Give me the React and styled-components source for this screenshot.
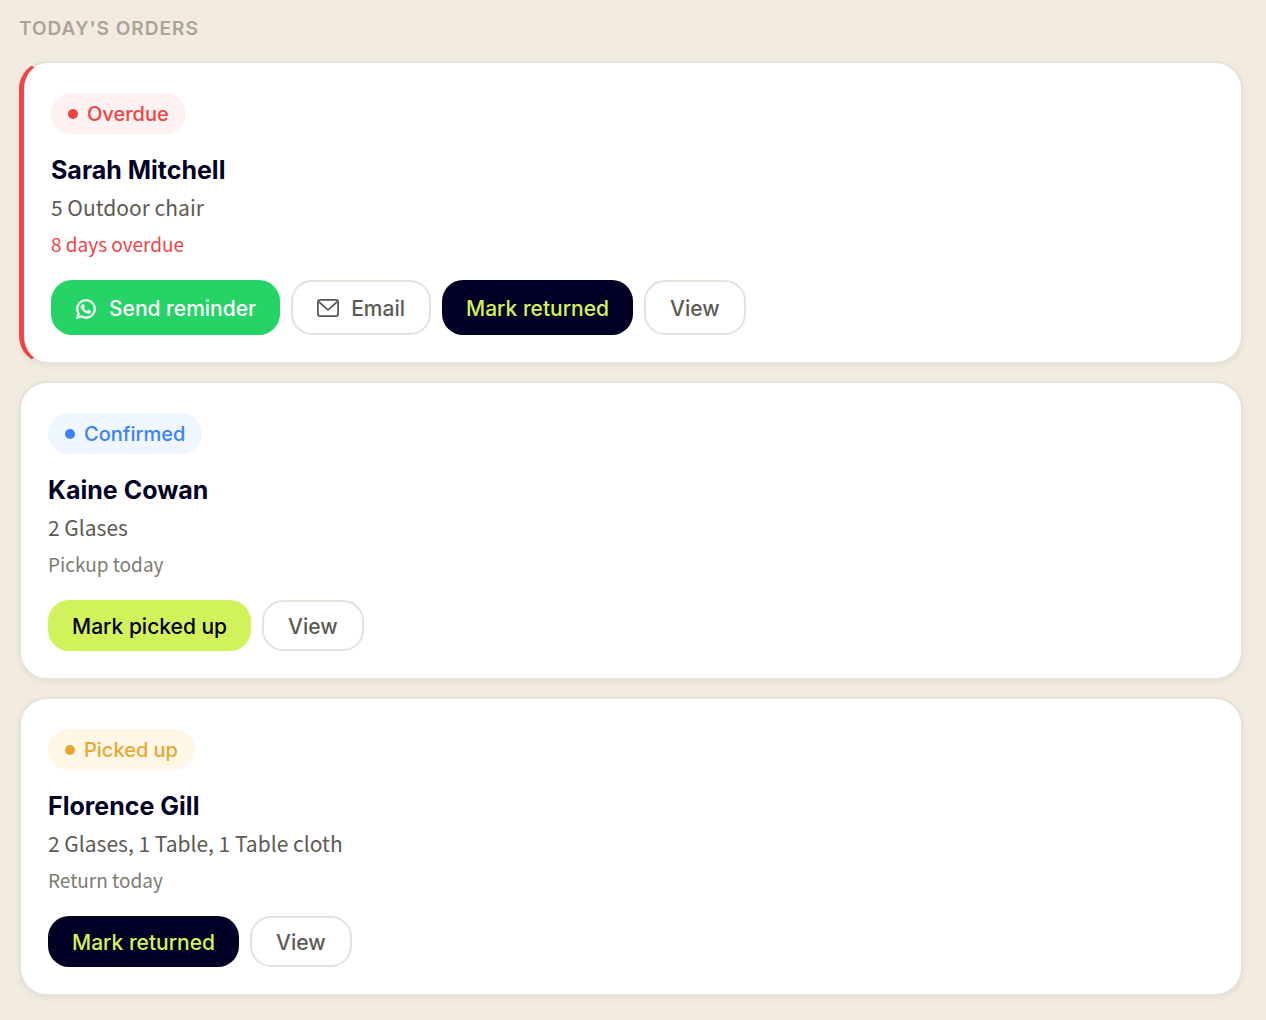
import React from 'react';
import styled, { createGlobalStyle, css } from 'styled-components';
import { FaWhatsapp } from 'react-icons/fa';

const headingFont = "Inter, 'Liberation Sans', sans-serif";
const bodyFont = "'Noto Sans CJK SC', 'Noto Sans', sans-serif";

const GlobalStyle = createGlobalStyle`
  * {
    box-sizing: border-box;
  }

  body {
    margin: 0;
    background-color: #f2ebdf;
    font-family: ${bodyFont};
    -webkit-font-smoothing: antialiased;
  }
`;

const Page = styled('main')`
  padding: 13px 23px 24px 19px;
`;

const SectionTitle = styled('h2')`
  margin: 0 0 16px;
  font: 600 19px/32px ${headingFont};
  letter-spacing: 1px;
  text-transform: uppercase;
  color: #a8a598;
`;

const OrderList = styled('div')`
  display: flex;
  flex-direction: column;
  gap: 17px;
`;

const Card = styled('article')`
  padding: 30px 27px 27px;
  background-color: #ffffff;
  border: 2px solid #e4e2da;
  border-radius: 28px;
  box-shadow: 0 2px 6px rgba(0, 0, 0, 0.06);
  ${props =>
    props.$overdue &&
    css`
      border-left: 5px solid #ef4444;
    `};
`;

const tones = {
  overdue: { color: '#ef4444', background: '#fef1f1' },
  confirmed: { color: '#3b82f6', background: '#eff6ff' },
  pickedUp: { color: '#e8a532', background: '#fff7e6' },
};

const Badge = styled('span')`
  display: flex;
  align-items: center;
  gap: 9px;
  width: fit-content;
  padding: 1px 17px 0;
  border-radius: 21px;
  font: 500 20px/40px ${headingFont};
  color: ${props => tones[props.$tone].color};
  background-color: ${props => tones[props.$tone].background};

  &::before {
    content: '';
    width: 10px;
    height: 10px;
    border-radius: 50%;
    background-color: currentColor;
  }
`;

const Customer = styled('h3')`
  margin: 18px 0 0;
  font: 700 25px/36px ${headingFont};
  color: #020024;
`;

const Items = styled('p')`
  margin: 0;
  font-size: 21px;
  line-height: 38px;
  color: #5c5a52;
`;

const Due = styled('p')`
  margin: 0;
  font-size: 19px;
  line-height: 36px;
  color: ${props => (props.$overdue ? '#ef4444' : '#7d7b72')};
`;

const Actions = styled('div')`
  display: flex;
  flex-wrap: wrap;
  gap: 11px;
  margin-top: 18px;
`;

const variants = {
  outline: css`
    padding-inline: 24px;
    color: #5c5a52;
    background-color: #ffffff;
    border-color: #e4e2da;
  `,
  dark: css`
    color: #d2f25c;
    background-color: #020024;
  `,
  lime: css`
    color: #020024;
    background-color: #d2f25c;
  `,
  whatsapp: css`
    color: #ffffff;
    background-color: #25d366;
  `,
};

const Button = styled('button')`
  display: flex;
  align-items: center;
  gap: 12px;
  padding: ${props => (props.$tall ? '11px 22px 9px' : '9px 22px 7px')};
  border: 2px solid transparent;
  border-radius: 21px;
  font: 500 21px/31px ${headingFont};
  cursor: pointer;
  ${props => variants[props.$variant]};
`;

const WhatsappIcon = () => (
  <FaWhatsapp size={22} stroke="currentColor" strokeWidth="16" aria-hidden="true" />
);

const MailIcon = () => (
  <svg width="22" height="22" viewBox="0 0 22 22" fill="none" aria-hidden="true">
    <rect x="0.9" y="1.9" width="20.2" height="16.2" rx="2" stroke="currentColor" strokeWidth="1.8" />
    <path d="M1.4 3.4l8.9 7.9a1 1 0 0 0 1.4 0l8.9-7.9" stroke="currentColor" strokeWidth="1.8" />
  </svg>
);

const orders = [
  {
    customer: 'Sarah Mitchell',
    status: 'Overdue',
    tone: 'overdue',
    items: '5 Outdoor chair',
    due: '8 days overdue',
    actions: [
      { label: 'Send reminder', variant: 'whatsapp', icon: <WhatsappIcon /> },
      { label: 'Email', variant: 'outline', icon: <MailIcon /> },
      { label: 'Mark returned', variant: 'dark' },
      { label: 'View', variant: 'outline' },
    ],
  },
  {
    customer: 'Kaine Cowan',
    status: 'Confirmed',
    tone: 'confirmed',
    items: '2 Glases',
    due: 'Pickup today',
    actions: [
      { label: 'Mark picked up', variant: 'lime' },
      { label: 'View', variant: 'outline' },
    ],
  },
  {
    customer: 'Florence Gill',
    status: 'Picked up',
    tone: 'pickedUp',
    items: '2 Glases, 1 Table, 1 Table cloth',
    due: 'Return today',
    actions: [
      { label: 'Mark returned', variant: 'dark' },
      { label: 'View', variant: 'outline' },
    ],
  },
];

const OrderCard = ({ order }) => {
  const overdue = order.tone === 'overdue';

  return (
    <Card $overdue={overdue}>
      <Badge $tone={order.tone}>{order.status}</Badge>
      <Customer>{order.customer}</Customer>
      <Items>{order.items}</Items>
      <Due $overdue={overdue}>{order.due}</Due>
      <Actions>
        {order.actions.map(({ label, variant, icon }) => (
          <Button key={label} type="button" $variant={variant} $tall={overdue}>
            {icon}
            {label}
          </Button>
        ))}
      </Actions>
    </Card>
  );
};

const App = () => (
  <>
    <GlobalStyle />
    <Page>
      <SectionTitle>Today's orders</SectionTitle>
      <OrderList>
        {orders.map(order => (
          <OrderCard key={order.customer} order={order} />
        ))}
      </OrderList>
    </Page>
  </>
);

export default App;
